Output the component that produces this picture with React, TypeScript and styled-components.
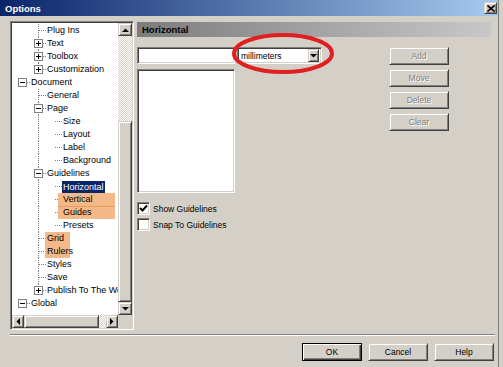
import React from 'react';
import styled, { createGlobalStyle, css } from 'styled-components';

const GlobalStyle = createGlobalStyle`
  html, body { margin: 0; padding: 0; background: #d4d0c8; }
  body { font-family: "Liberation Sans", Arial, sans-serif; font-size: 9px; color: #000; }
  * { box-sizing: border-box; }
`;

const raised = css`
  background: #d4d0c8;
  border: 1px solid;
  border-color: #d4d0c8 #404040 #404040 #d4d0c8;
  box-shadow: inset 1px 1px #fff, inset -1px -1px #808080;
`;

const sunken = css`
  border: 1px solid;
  border-color: #808080 #fff #fff #808080;
  box-shadow: inset 1px 1px #404040, inset -1px -1px #d4d0c8;
`;

const Window = styled.div`
  width: 499px;
  height: 367px;
  background: #d4d0c8;
  border-right: 1px solid #808080;
  display: flex;
  flex-direction: column;
`;

const TitleBar = styled.div`
  height: 16px;
  flex: none;
  background: linear-gradient(to right, #0a246a, #a6caf0);
  display: flex;
  align-items: center;
  padding: 0 1px 0 5px;
  color: #fff;
  font-weight: bold;
  font-size: 9.5px;
`;

const TitleText = styled.span`
  flex: 1;
`;

const CloseBtn = styled.div`
  ${raised};
  width: 13px;
  height: 12px;
  display: flex;
  align-items: center;
  justify-content: center;
`;

const Body = styled.div`
  flex: 1;
  display: flex;
  flex-direction: column;
  padding: 5px 0 0 10px;
`;

const MainRow = styled.div`
  display: flex;
  gap: 3px;
  height: 309px;
`;

const TreeBox = styled.div`
  ${sunken};
  width: 124px;
  height: 309px;
  padding: 1px;
  display: grid;
  grid-template-columns: 1fr 14px;
  grid-template-rows: 1fr 13px;
`;

const TreeArea = styled.div`
  background: #fff;
  overflow: hidden;
  padding-top: 1px;
`;

const Row = styled.div`
  height: 13px;
  display: flex;
  align-items: center;
  padding-left: 2px;
  white-space: nowrap;
`;

const Label = styled.span<{ $sel?: boolean; $mark?: boolean; $ext?: number; $w?: number; $div?: boolean }>`
  height: 13px;
  line-height: 13px;
  padding: 0 1px;
  ${(p) =>
    p.$sel &&
    css`
      background: #0a246a;
      color: #fff;
      height: 12px;
      line-height: 12px;
    `}
  ${(p) =>
    p.$mark &&
    css`
      background: #f4b989;
      margin-left: ${-(p.$ext ?? 0)}px;
      padding-left: ${(p.$ext ?? 0) + 1}px;
      width: ${p.$w}px;
    `}
  ${(p) =>
    p.$div &&
    css`
      border-top: 1px solid #e89a62;
      line-height: 11px;
    `}
`;

const VScroll = styled.div`
  display: flex;
  flex-direction: column;
`;

const HScroll = styled.div`
  display: flex;
`;

const ScrollBtn = styled.div<{ $w?: number; $h?: number }>`
  ${raised};
  width: ${(p) => (p.$w ? `${p.$w}px` : '100%')};
  height: ${(p) => (p.$h ? `${p.$h}px` : '100%')};
  flex: none;
  display: flex;
  align-items: center;
  justify-content: center;
`;

const Track = styled.div`
  flex: 1;
  background: repeating-conic-gradient(#d4d0c8 0 25%, #fff 0 50%) 0 0 / 2px 2px;
`;

const Thumb = styled.div<{ $w?: number; $h?: number }>`
  ${raised};
  flex: none;
  width: ${(p) => (p.$w ? `${p.$w}px` : '100%')};
  height: ${(p) => (p.$h ? `${p.$h}px` : '100%')};
`;

const Corner = styled.div`
  background: #d4d0c8;
`;

const RightPanel = styled.div`
  width: 354px;
  padding-top: 1px;
  display: flex;
  flex-direction: column;
  font-size: 8.5px;
`;

const Header = styled.div`
  height: 15px;
  background: linear-gradient(to right, #7c7c7c, #c8c8c8);
  display: flex;
  align-items: center;
  padding-left: 5px;
  font-weight: bold;
  font-size: 9.5px;
`;

const Content = styled.div`
  display: flex;
  margin-top: 10px;
`;

const LeftCol = styled.div`
  width: 185px;
  display: flex;
  flex-direction: column;
  position: relative;
`;

const InputRow = styled.div`
  display: flex;
  gap: 2px;
  height: 17px;
`;

const TextInput = styled.div`
  ${sunken};
  background: #fff;
  width: 98px;
  height: 17px;
`;

const Combo = styled.div`
  ${sunken};
  background: #fff;
  width: 85px;
  height: 17px;
  padding: 2px;
  display: flex;
  align-items: center;
`;

const ComboText = styled.span`
  flex: 1;
  padding-left: 1px;
`;

const DropBtn = styled.div`
  ${raised};
  width: 11px;
  height: 13px;
  display: flex;
  align-items: center;
  justify-content: center;
`;

const ListBox = styled.div`
  ${sunken};
  background: #fff;
  width: 98px;
  height: 124px;
  margin-top: 5px;
`;

const CheckList = styled.div`
  margin-top: 9px;
  display: flex;
  flex-direction: column;
  gap: 3px;
`;

const CheckRow = styled.div`
  display: flex;
  align-items: center;
  gap: 3px;
  height: 13px;
`;

const CheckBox = styled.div`
  ${sunken};
  background: #fff;
  width: 13px;
  height: 13px;
  display: flex;
  align-items: center;
  justify-content: center;
`;

const Ellipse = styled.svg`
  position: absolute;
  left: 95px;
  top: -14px;
  pointer-events: none;
`;

const ButtonCol = styled.div`
  margin-left: 67px;
  display: flex;
  flex-direction: column;
  gap: 4px;
`;

const Button = styled.div<{ $disabled?: boolean; $default?: boolean }>`
  ${raised};
  width: 60px;
  height: 18px;
  display: flex;
  align-items: center;
  justify-content: center;
  font-size: 8.5px;
  ${(p) =>
    p.$disabled &&
    css`
      color: #808080;
      text-shadow: 1px 1px #fff;
    `}
  ${(p) =>
    p.$default &&
    css`
      border-color: #000;
      box-shadow: inset 1px 1px #fff, inset -1px -1px #404040, inset -2px -2px #808080;
    `}
`;

const Separator = styled.div`
  margin-top: 4px;
  width: 485px;
  height: 2px;
  border-top: 1px solid #808080;
  border-bottom: 1px solid #fff;
`;

const Footer = styled.div`
  margin-top: 7px;
  display: flex;
  justify-content: flex-end;
  gap: 6px;
  padding-right: 4px;
`;

type Cell = { v?: 'full' | 'top'; h?: boolean; exp?: '+' | '-' } | null;

const Glyph: React.FC<{ c: Cell }> = ({ c }) => (
  <svg width="16" height="13" style={{ flex: 'none', display: 'block' }} shapeRendering="crispEdges">
    {c?.v && (
      <line x1="8.5" y1="0" x2="8.5" y2={c.v === 'full' ? 13 : 7} stroke="#808080" strokeDasharray="1 1" />
    )}
    {c?.h && <line x1={c.exp ? 13 : 9} y1="6.5" x2="16" y2="6.5" stroke="#808080" strokeDasharray="1 1" />}
    {c?.exp && (
      <>
        <rect x="4.5" y="2.5" width="8" height="8" fill="#fff" stroke="#808080" />
        <line x1="6" y1="6.5" x2="11" y2="6.5" stroke="#000" />
        {c.exp === '+' && <line x1="8.5" y1="4" x2="8.5" y2="9" stroke="#000" />}
      </>
    )}
  </svg>
);

type Item = {
  text: string;
  cells: Cell[];
  sel?: boolean;
  mark?: { ext: number; w: number; div?: boolean };
};

const L2 = (text: string, extra: Partial<Item> = {}, c: Cell = { v: 'full', h: true }): Item => ({
  text,
  cells: [null, c],
  ...extra,
});
const L3 = (text: string, extra: Partial<Item> = {}): Item => ({
  text,
  cells: [null, { v: 'full' }, { h: true }],
  ...extra,
});

const items: Item[] = [
  L2('Plug Ins'),
  L2('Text', {}, { v: 'full', h: true, exp: '+' }),
  L2('Toolbox', {}, { v: 'full', h: true, exp: '+' }),
  L2('Customization', {}, { v: 'top', h: true, exp: '+' }),
  { text: 'Document', cells: [{ h: true, exp: '-' }] },
  L2('General'),
  L2('Page', {}, { v: 'full', h: true, exp: '-' }),
  L3('Size'),
  L3('Layout'),
  L3('Label'),
  L3('Background'),
  L2('Guidelines', {}, { v: 'full', h: true, exp: '-' }),
  L3('Horizontal', { sel: true }),
  L3('Vertical', { mark: { ext: 4, w: 57 } }),
  L3('Guides', { mark: { ext: 4, w: 57, div: true } }),
  L3('Presets'),
  L2('Grid', { mark: { ext: 1, w: 25 } }),
  L2('Rulers', { mark: { ext: 1, w: 25 } }),
  L2('Styles'),
  L2('Save'),
  L2('Publish To The Web', {}, { v: 'top', h: true, exp: '+' }),
  { text: 'Global', cells: [{ h: true, exp: '-' }] },
];

const Arrow: React.FC<{ dir: 'up' | 'down' | 'left' | 'right' }> = ({ dir }) => {
  const pts = {
    up: '0,4 7,4 3.5,0.5',
    down: '0,0 7,0 3.5,3.5',
    left: '4,0 4,7 0.5,3.5',
    right: '0,0 0,7 3.5,3.5',
  }[dir];
  const vert = dir === 'up' || dir === 'down';
  return (
    <svg width={vert ? 7 : 4} height={vert ? 4 : 7}>
      <polygon points={pts} fill="#000" />
    </svg>
  );
};

export default function App() {
  return (
    <>
      <GlobalStyle />
      <Window>
        <TitleBar>
          <TitleText>Options</TitleText>
          <CloseBtn>
            <svg width="8" height="7">
              <path d="M0.5 0.5 L7.5 6.5 M7.5 0.5 L0.5 6.5" stroke="#000" strokeWidth="1.6" />
            </svg>
          </CloseBtn>
        </TitleBar>
        <Body>
          <MainRow>
            <TreeBox>
              <TreeArea>
                {items.map((it) => (
                  <Row key={it.text}>
                    {it.cells.map((c, i) => (
                      <Glyph key={i} c={c} />
                    ))}
                    <Label
                      $sel={it.sel}
                      $mark={!!it.mark}
                      $ext={it.mark?.ext}
                      $w={it.mark?.w}
                      $div={it.mark?.div}
                    >
                      {it.text}
                    </Label>
                  </Row>
                ))}
              </TreeArea>
              <VScroll>
                <ScrollBtn $h={13}>
                  <Arrow dir="up" />
                </ScrollBtn>
                <Track />
                <Thumb $h={181} />
                <ScrollBtn $h={13}>
                  <Arrow dir="down" />
                </ScrollBtn>
              </VScroll>
              <HScroll>
                <ScrollBtn $w={12}>
                  <Arrow dir="left" />
                </ScrollBtn>
                <Thumb $w={75} />
                <Track />
                <ScrollBtn $w={12}>
                  <Arrow dir="right" />
                </ScrollBtn>
              </HScroll>
              <Corner />
            </TreeBox>
            <RightPanel>
              <Header>Horizontal</Header>
              <Content>
                <LeftCol>
                  <InputRow>
                    <TextInput />
                    <Combo>
                      <ComboText>millimeters</ComboText>
                      <DropBtn>
                        <Arrow dir="down" />
                      </DropBtn>
                    </Combo>
                  </InputRow>
                  <ListBox />
                  <CheckList>
                    <CheckRow>
                      <CheckBox>
                        <svg width="9" height="9">
                          <path d="M1 4 L3.5 6.5 L8 1.5" stroke="#000" strokeWidth="2" fill="none" />
                        </svg>
                      </CheckBox>
                      Show Guidelines
                    </CheckRow>
                    <CheckRow>
                      <CheckBox />
                      Snap To Guidelines
                    </CheckRow>
                  </CheckList>
                  <Ellipse width="102" height="41">
                    <ellipse cx="51" cy="20.5" rx="49" ry="18.5" fill="none" stroke="#e02020" strokeWidth="4" />
                  </Ellipse>
                </LeftCol>
                <ButtonCol>
                  <Button $disabled>Add</Button>
                  <Button $disabled>Move</Button>
                  <Button $disabled>Delete</Button>
                  <Button $disabled>Clear</Button>
                </ButtonCol>
              </Content>
            </RightPanel>
          </MainRow>
          <Separator />
          <Footer>
            <Button $default>OK</Button>
            <Button>Cancel</Button>
            <Button>Help</Button>
          </Footer>
        </Body>
      </Window>
    </>
  );
}
